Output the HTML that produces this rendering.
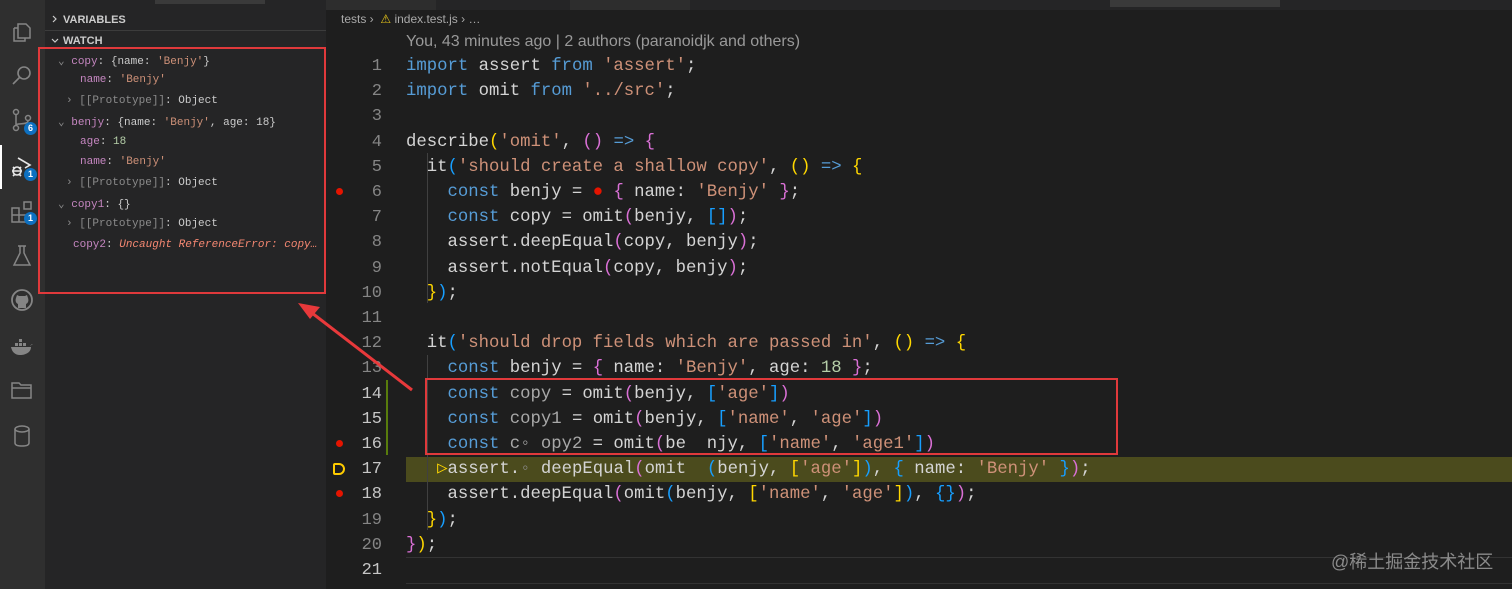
<!DOCTYPE html>
<html><head><meta charset="utf-8"><style>
*{margin:0;padding:0;box-sizing:border-box}
body{width:1512px;height:589px;overflow:hidden;background:#1e1e1e;position:relative;font-family:"Liberation Sans",sans-serif}
#act{position:absolute;left:0;top:0;width:45px;height:589px;background:#2f2f2f}
#side{position:absolute;left:45px;top:0;width:281px;height:589px;background:#252526}
.ic{position:absolute;left:10px}
.badge{position:absolute;width:13px;height:13px;border-radius:50%;background:#0e70c0;color:#fff;font-size:9px;font-weight:bold;text-align:center;line-height:13px}
.sh{position:absolute;left:63px;font-size:11px;font-weight:bold;color:#cccccc}
.w{position:absolute;font-family:"Liberation Mono",monospace;font-size:11px;white-space:pre;color:#cccccc}
.p{color:#c586c0}.s{color:#ce9178}.g{color:#8b8b8b}.n{color:#b5cea8}.e{color:#f48771;font-style:italic}
.code{position:absolute;left:406px;font-family:"Liberation Mono",monospace;font-size:17.3px;white-space:pre;color:#d4d4d4;line-height:25.2px}
.ln{position:absolute;left:340px;width:42px;text-align:right;font-family:"Liberation Mono",monospace;font-size:17px;color:#858585;line-height:25.2px}
.k{color:#569cd6}.st{color:#ce9178}.y{color:#ffd700}.m{color:#da70d6}.b{color:#179fff}.num{color:#b5cea8}.d{color:#9cdcfe}.v{color:#c8c8c8}.dim{color:#a8a8a8}
.bp{position:absolute;left:336px;width:7px;height:7px;border-radius:50%;background:#e51400}
</style></head><body>
<div id="act">
<svg class="ic" style="top:20px" width="24" height="24" viewBox="0 0 24 24" fill="none" stroke="#858585" stroke-width="1.5"><path d="M8 4h8l4 4v10H8z M4 8h4 M4 8v13h11v-3"/></svg>
<svg class="ic" style="top:64px" width="24" height="24" viewBox="0 0 24 24" fill="none" stroke="#858585" stroke-width="1.6"><circle cx="14" cy="9" r="6"/><path d="M10 13l-7 7"/></svg>
<svg class="ic" style="top:108px" width="24" height="24" viewBox="0 0 24 24" fill="none" stroke="#858585" stroke-width="1.5"><circle cx="6" cy="4" r="2.5"/><circle cx="6" cy="20" r="2.5"/><circle cx="18" cy="10" r="2.5"/><path d="M6 7v10M18 13c0 4-12 2-12 4"/></svg>
<div class="badge" style="left:24px;top:122px">6</div>
<div style="position:absolute;left:0;top:145px;width:2px;height:44px;background:#fff"></div>
<svg class="ic" style="top:155px" width="24" height="24" viewBox="0 0 24 24" fill="none" stroke="#e8e8e8" stroke-width="1.6"><path d="M8 3l12 7-5 3"/><circle cx="7" cy="16" r="4"/><path d="M2 16h10M3 12l2 2M11 12l-2 2M3 21l2-2M11 21l-2-2"/></svg>
<div class="badge" style="left:24px;top:168px">1</div>
<svg class="ic" style="top:200px" width="24" height="24" viewBox="0 0 24 24" fill="none" stroke="#858585" stroke-width="1.5"><path d="M2 8h7v7H2zM9 15h7v7H9zM2 15h7v7H2zM14 2h7v7h-7z"/></svg>
<div class="badge" style="left:24px;top:212px">1</div>
<svg class="ic" style="top:244px" width="24" height="24" viewBox="0 0 24 24" fill="none" stroke="#858585" stroke-width="1.5"><path d="M8 2h8M10 2v7l-6 12h16l-6-12V2"/></svg>
<svg class="ic" style="top:288px" width="24" height="24" viewBox="0 0 24 24"><circle cx="12" cy="12" r="10" fill="none" stroke="#858585" stroke-width="1.8"/><path d="M8 20v-4c-2-1-3-3-2-6l1-3 2 1h6l2-1 1 3c1 3 0 5-2 6v4z" fill="#858585"/></svg>
<svg class="ic" style="top:335px" width="24" height="24" viewBox="0 0 24 24" fill="#858585"><path d="M1 12h20c0 5-5 8-11 8-5 0-8-3-9-8z"/><rect x="5" y="8" width="3" height="3"/><rect x="9" y="8" width="3" height="3"/><rect x="13" y="8" width="3" height="3"/><rect x="9" y="4" width="3" height="3"/><path d="M20 11c1-2 3-2 3-2"/></svg>
<svg class="ic" style="top:378px" width="24" height="24" viewBox="0 0 24 24" fill="none" stroke="#858585" stroke-width="1.5"><path d="M2 5h7l2 2h10v13H2z M2 10h19"/></svg>
<svg class="ic" style="top:424px" width="24" height="24" viewBox="0 0 24 24" fill="none" stroke="#858585" stroke-width="1.5"><ellipse cx="12" cy="5" rx="7" ry="3"/><path d="M5 5v14c0 2 3 3 7 3s7-1 7-3V5"/></svg>
</div>
<div id="side"></div>
<div style="position:absolute;left:155px;top:0;width:110px;height:4px;background:#3a3a3a"></div>
<div style="position:absolute;left:45px;top:30px;width:281px;height:1px;background:#3c3c3c"></div>
<svg style="position:absolute;left:50px;top:14px" width="10" height="10" viewBox="0 0 10 10" fill="none" stroke="#ccc" stroke-width="1.2"><path d="M3 2l3 3-3 3"/></svg>
<div class="sh" style="top:14px">VARIABLES</div>
<svg style="position:absolute;left:50px;top:36px" width="10" height="10" viewBox="0 0 10 10" fill="none" stroke="#ccc" stroke-width="1.2"><path d="M2 3l3 3 3-3"/></svg>
<div class="sh" style="top:35px">WATCH</div>

<div class="w" style="left:58px;top:54px"><span class="g">⌄</span> <span class="p">copy</span>: {name: <span class="s">'Benjy'</span>}</div>
<div class="w" style="left:80px;top:74px"><span class="p">name</span>: <span class="s">'Benjy'</span></div>
<div class="w" style="left:66px;top:95px"><span class="g">›</span> <span class="g">[[Prototype]]</span>: Object</div>
<div class="w" style="left:58px;top:115px"><span class="g">⌄</span> <span class="p">benjy</span>: {name: <span class="s">'Benjy'</span>, age: 18}</div>
<div class="w" style="left:80px;top:136px"><span class="p">age</span>: <span class="n">18</span></div>
<div class="w" style="left:80px;top:156px"><span class="p">name</span>: <span class="s">'Benjy'</span></div>
<div class="w" style="left:66px;top:177px"><span class="g">›</span> <span class="g">[[Prototype]]</span>: Object</div>
<div class="w" style="left:58px;top:197px"><span class="g">⌄</span> <span class="p">copy1</span>: {}</div>
<div class="w" style="left:66px;top:218px"><span class="g">›</span> <span class="g">[[Prototype]]</span>: Object</div>
<div class="w" style="left:73px;top:239px"><span class="p">copy2</span>: <span class="e">Uncaught ReferenceError: copy…</span></div>
<div style="position:absolute;left:38px;top:47px;width:288px;height:247px;border:2px solid #e0393b"></div>

<div style="position:absolute;left:326px;top:0;width:1186px;height:10px;background:#252526"></div>
<div style="position:absolute;left:326px;top:0;width:110px;height:10px;background:#2d2d2d"></div>
<div style="position:absolute;left:570px;top:0;width:120px;height:10px;background:#2d2d2d"></div>
<div style="position:absolute;left:1110px;top:0;width:170px;height:7px;background:#3a3a3a"></div>
<div style="position:absolute;left:341px;top:12px;font-size:12px;color:#a9a9a9;white-space:pre">tests ›  <span style="color:#e8c619">⚠</span> index.test.js › …</div>
<div style="position:absolute;left:406px;top:33px;font-size:16px;color:#999999;white-space:pre">You, 43 minutes ago | 2 authors (paranoidjk and others)</div>

<div style="position:absolute;left:406px;top:457px;width:1106px;height:25px;background:#4b4b1d"></div>
<div style="position:absolute;left:406px;top:557px;width:1106px;height:1px;background:#333"></div>
<div style="position:absolute;left:406px;top:583px;width:1106px;height:1px;background:#333"></div>
<div style="position:absolute;left:386px;top:380px;width:2px;height:75px;background:#587c0c"></div>
<div style="position:absolute;left:427px;top:153px;width:1px;height:150px;background:#404040"></div>
<div style="position:absolute;left:427px;top:355px;width:1px;height:175px;background:#404040"></div>

<div class="ln" style="top:54px">1<br>2<br>3<br>4<br>5<br>6<br>7<br>8<br>9<br>10<br>11<br>12<br>13<br><span style="color:#c6c6c6">14<br>15<br>16<br>17<br>18</span><br>19<br>20<br><span style="color:#c6c6c6">21</span></div>
<div class="bp" style="top:188px"></div>
<div class="bp" style="top:440px"></div>
<div class="bp" style="top:490px"></div>
<div style="position:absolute;left:333px;top:463px;width:12px;height:12px;border:2px solid #ffcc00;border-radius:2px 6px 6px 2px"></div>

<div class="code" style="top:54px"><span class="k">import</span> assert <span class="k">from</span> <span class="st">'assert'</span>;
<span class="k">import</span> omit <span class="k">from</span> <span class="st">'../src'</span>;

describe<span class="y">(</span><span class="st">'omit'</span>, <span class="m">()</span> <span class="k">=&gt;</span> <span class="m">{</span>
  it<span class="b">(</span><span class="st">'should create a shallow copy'</span>, <span class="y">()</span> <span class="k">=&gt;</span> <span class="y">{</span>
    <span class="k">const</span> benjy = <span style="color:#e51400">●</span> <span class="m">{</span> name: <span class="st">'Benjy'</span> <span class="m">}</span>;
    <span class="k">const</span> copy = omit<span class="m">(</span>benjy, <span class="b">[]</span><span class="m">)</span>;
    assert.deepEqual<span class="m">(</span>copy, benjy<span class="m">)</span>;
    assert.notEqual<span class="m">(</span>copy, benjy<span class="m">)</span>;
  <span class="y">}</span><span class="b">)</span>;

  it<span class="b">(</span><span class="st">'should drop fields which are passed in'</span>, <span class="y">()</span> <span class="k">=&gt;</span> <span class="y">{</span>
    <span class="k">const</span> benjy = <span class="m">{</span> name: <span class="st">'Benjy'</span>, age: <span class="num">18</span> <span class="m">}</span>;
    <span class="k">const</span> <span class="dim">copy</span> = omit<span class="m">(</span>benjy, <span class="b">[</span><span class="st">'age'</span><span class="b">]</span><span class="m">)</span>
    <span class="k">const</span> <span class="dim">copy1</span> = omit<span class="m">(</span>benjy, <span class="b">[</span><span class="st">'name'</span>, <span class="st">'age'</span><span class="b">]</span><span class="m">)</span>
    <span class="k">const</span> <span class="dim">c◦ opy2</span> = omit<span class="m">(</span>be  njy, <span class="b">[</span><span class="st">'name'</span>, <span class="st">'age1'</span><span class="b">]</span><span class="m">)</span>
   <span class="y">▷</span>assert.<span class="g">◦</span> deepEqual<span class="m">(</span>omit  <span class="b">(</span>benjy, <span class="y">[</span><span class="st">'age'</span><span class="y">]</span><span class="b">)</span>, <span class="b">{</span> name: <span class="st">'Benjy'</span> <span class="b">}</span><span class="m">)</span>;
    assert.deepEqual<span class="m">(</span>omit<span class="b">(</span>benjy, <span class="y">[</span><span class="st">'name'</span>, <span class="st">'age'</span><span class="y">]</span><span class="b">)</span>, <span class="b">{}</span><span class="m">)</span>;
  <span class="y">}</span><span class="b">)</span>;
<span class="m">}</span><span class="y">)</span>;
</div>

<div style="position:absolute;left:425px;top:378px;width:693px;height:77px;border:2px solid #e0393b"></div>
<svg style="position:absolute;left:0;top:0" width="1512" height="589"><line x1="412" y1="390" x2="312" y2="313" stroke="#e8393b" stroke-width="3"/><path d="M298 303l22 4-10 12z" fill="#e8393b"/></svg>
<div style="position:absolute;left:1331px;top:548px;font-family:'Liberation Sans','Noto Sans CJK SC',sans-serif;font-size:18px;color:#8a8a8a">@稀土掘金技术社区</div>
</body></html>
